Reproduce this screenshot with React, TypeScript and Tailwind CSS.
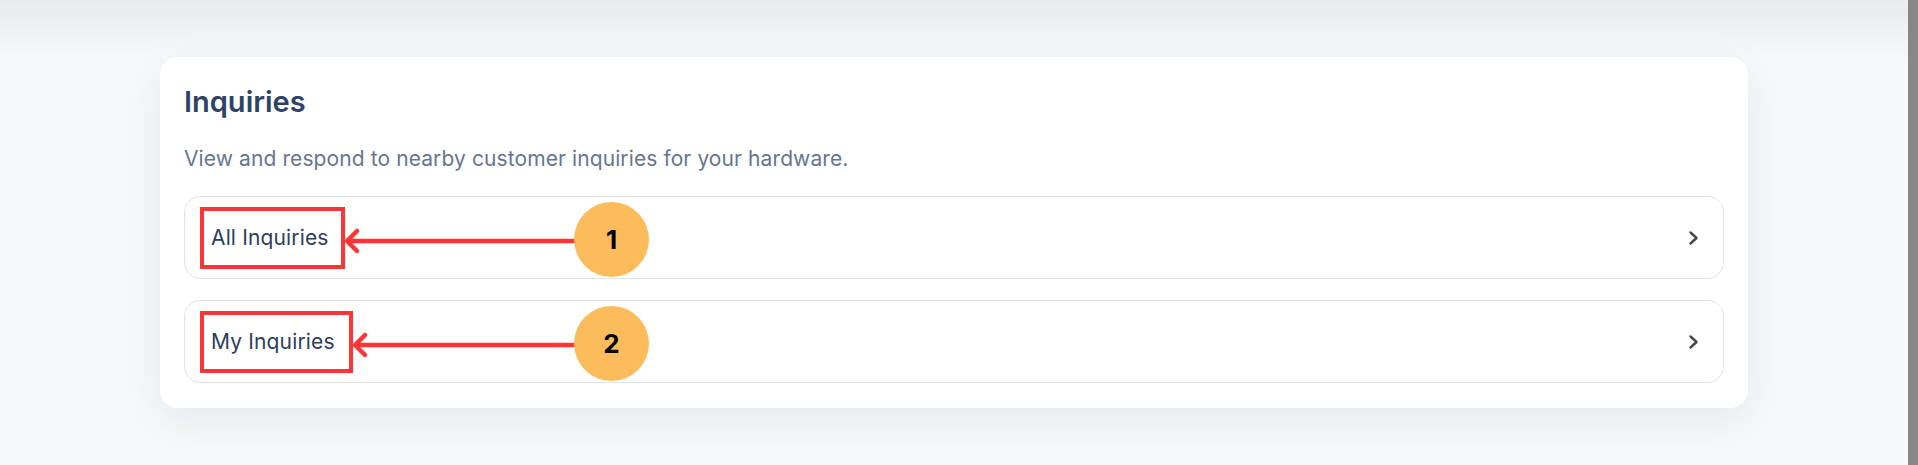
import { ReactNode } from "react";

interface InquiryRowProps {
  label: string;
  badge: string;
  boxWidth: number;
  tipX: number;
}

const CIRCLE_LEFT = 389;

function Chevron() {
  return (
    <svg width="24" height="24" viewBox="0 0 24 24" fill="none" className="shrink-0">
      <path
        d="M9.5 6.5 15.5 12 9.5 17.5"
        stroke="#474747"
        strokeWidth="2.4"
        strokeLinecap="round"
        strokeLinejoin="round"
      />
    </svg>
  );
}

function Arrow({ tipX }: { tipX: number }) {
  const w = CIRCLE_LEFT - tipX + 12;
  return (
    <svg
      width={w}
      height="30"
      viewBox={`0 0 ${w} 30`}
      fill="none"
      className="absolute top-[29px]"
      style={{ left: tipX - 3 }}
    >
      <path d={`M4 15H${w}`} stroke="#ff3535" strokeWidth="4.5" />
      <path d="M14 5 4 15 14 25" stroke="#ff3535" strokeWidth="4.5" strokeLinecap="round" strokeLinejoin="round" />
    </svg>
  );
}

function Annotation({ children }: { children: ReactNode }) {
  return (
    <div className="absolute left-[389px] top-[5px] flex h-[75px] w-[75px] items-center justify-center rounded-full bg-[#fdbc5b] text-[26px] font-bold text-black">
      {children}
    </div>
  );
}

function InquiryRow({ label, badge, boxWidth, tipX }: InquiryRowProps) {
  return (
    <div className="relative flex h-[83px] items-center justify-between rounded-[16px] border border-[#e1e3e8] bg-white pl-[26px] pr-[18px]">
      <span className="text-[21px] leading-[28px] tracking-[0.15px] text-[#2d3e60]">{label}</span>
      <Chevron />

      {/* annotation overlay */}
      <div
        className="absolute left-[15px] top-[10px] h-[62px] border-[4.5px] border-[#ff3535]"
        style={{ width: boxWidth }}
      />
      <Arrow tipX={tipX} />
      <Annotation>{badge}</Annotation>
    </div>
  );
}

export default function App() {
  return (
    <div className="flex h-[465px] w-full overflow-hidden bg-[#f7f8fa] font-['Inter',sans-serif]">
      <div className="flex min-w-0 flex-1 flex-col">
        <div className="h-[57px] shrink-0 bg-linear-to-b from-[#e9eaec] to-[#f7f8fa]" />

        <section className="mx-auto w-[1588px] rounded-[18px] bg-white px-6 pb-[25px] pt-[27px] shadow-[0_12px_40px_rgba(15,23,42,0.07)]">
          <h1 className="text-[29px] font-semibold leading-[36px] text-[#2e4266]">Inquiries</h1>
          <p className="mt-[25px] text-[21px] leading-[28px] tracking-[0.1px] text-[#66768f]">
            View and respond to nearby customer inquiries for your hardware.
          </p>

          <div className="mt-[23px] flex flex-col gap-[21px]">
            <InquiryRow label="All Inquiries" badge="1" boxWidth={145} tipX={161} />
            <InquiryRow label="My Inquiries" badge="2" boxWidth={153} tipX={169} />
          </div>
        </section>
      </div>
      <div className="w-[10px] shrink-0 bg-[#878787]" />
    </div>
  );
}
